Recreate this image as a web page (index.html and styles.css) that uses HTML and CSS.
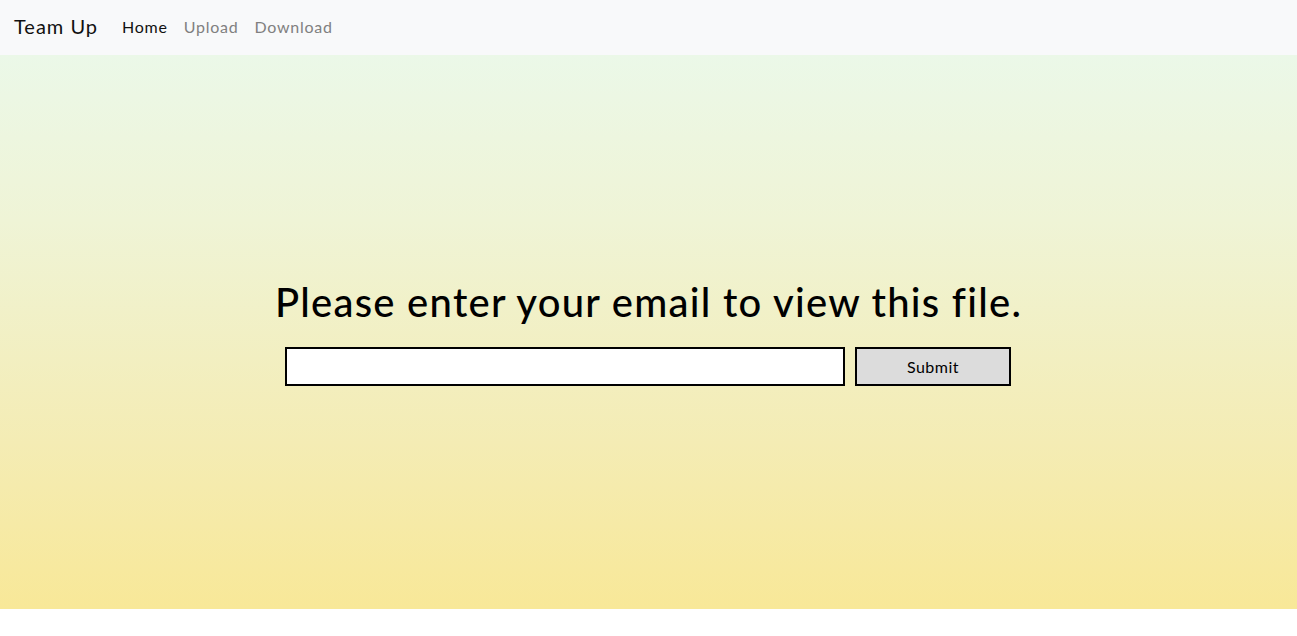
FILE: index.html
```html
<!DOCTYPE html>
<html lang="en">
<head>
<meta charset="utf-8">
<title>Team Up</title>
<link rel="stylesheet" href="styles.css">
</head>
<body>
<nav class="navbar">
  <a class="brand" href="#">Team Up</a>
  <ul class="nav">
    <li><a class="nav-link active" href="#">Home</a></li>
    <li><a class="nav-link" href="#">Upload</a></li>
    <li><a class="nav-link" href="#">Download</a></li>
  </ul>
</nav>
<main class="hero">
  <h1 class="title">Please enter your email to view this file.</h1>
  <form class="email-form">
    <input class="email-input" type="email">
    <button class="submit-btn" type="button">Submit</button>
  </form>
</main>
</body>
</html>
```
FILE: styles.css
```css
* { box-sizing: border-box; }
html, body { margin: 0; padding: 0; }
body {
  font-family: Lato, "Open Sans", sans-serif;
  color: #212529;
  background: #fff;
  height: 636px;
}
.navbar {
  height: 55px;
  background: #f8f9fa;
  display: flex;
  align-items: center;
  padding: 0 14px 3px;
}
.brand {
  font-size: 20px;
  letter-spacing: 1px;
  color: #111;
  text-decoration: none;
  margin-right: 16px;
}
.nav {
  display: flex;
  list-style: none;
  margin: 0;
  padding: 0;
}
.nav-link {
  display: block;
  padding: 8px;
  font-size: 16px;
  letter-spacing: 0.75px;
  color: #808080;
  text-decoration: none;
}
.nav-link.active { color: #111; }
.hero {
  height: 554px;
  background: linear-gradient(180deg, #ebf8e8 0%, #eff4d6 30%, #f4ecb4 70%, #f8e898 100%);
  display: flex;
  flex-direction: column;
  align-items: center;
  justify-content: center;
  padding-top: 0;
}
.title {
  margin: 0 0 21px;
  font-size: 40px;
  font-weight: 500;
  letter-spacing: 1.25px;
  color: #000;
  line-height: 1.2;
}
.email-form {
  display: flex;
  gap: 10px;
  margin-left: -1px;
}
.email-input {
  width: 560px;
  height: 39px;
  border: 2px solid #000;
  background: #fff;
  font: inherit;
}
.submit-btn {
  width: 156px;
  height: 39px;
  border: 2px solid #000;
  background: #dcdcdc;
  font-family: inherit;
  font-size: 16px;
  letter-spacing: 0.5px;
  color: #000;
}
```
